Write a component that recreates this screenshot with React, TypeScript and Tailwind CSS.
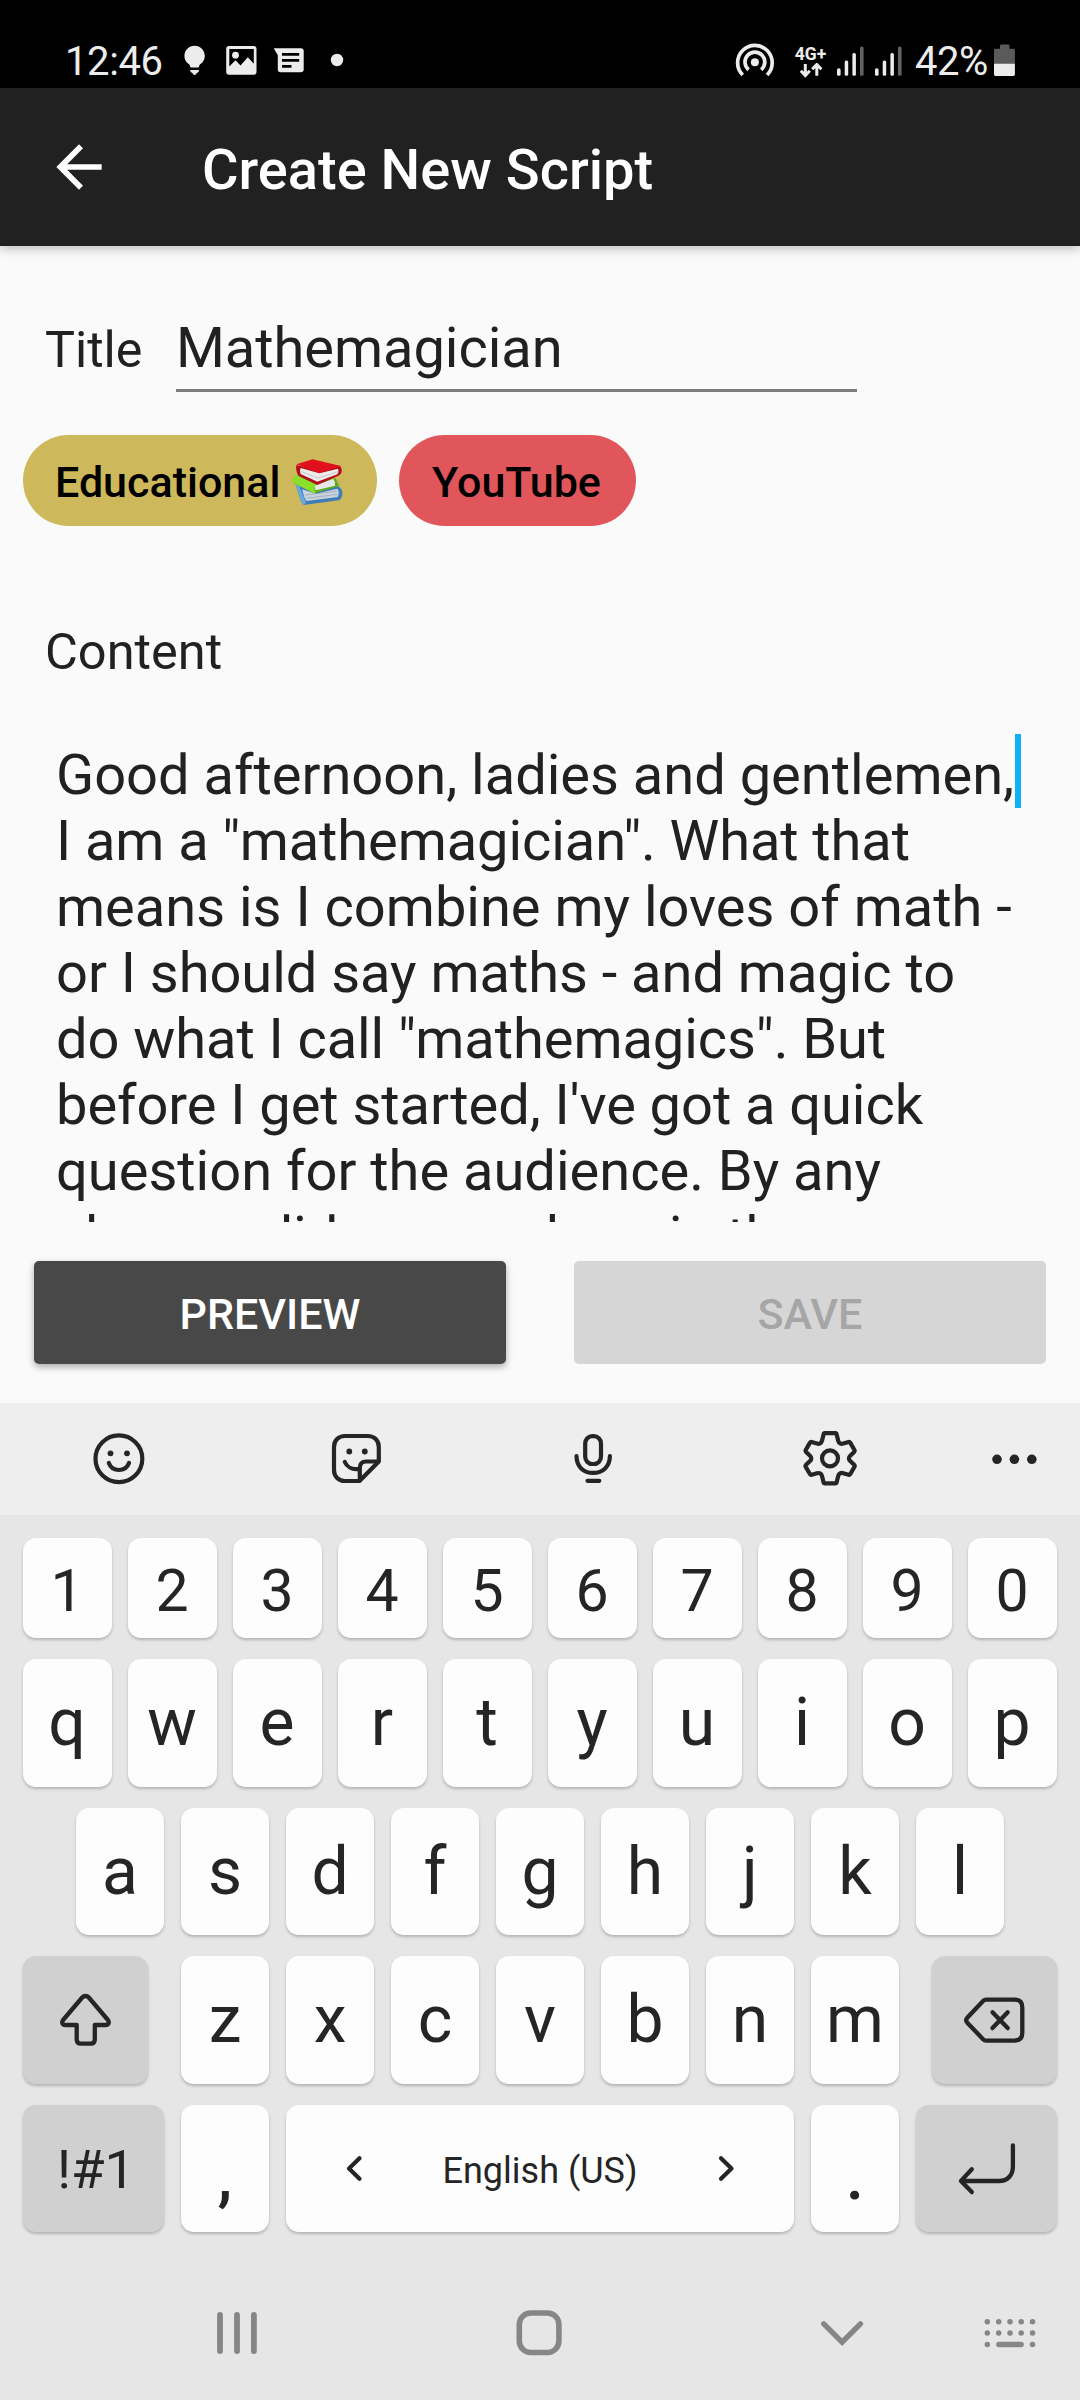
import type { ReactNode } from "react";

type IconProps = {
  box: [number, number, number, number];
  children: ReactNode;
  className?: string;
};

/** Inline drawing whose view box is given as [x, y, width, height] in screen units. */
function Icon({ box, children, className = "" }: IconProps) {
  return (
    <svg
      className={"block shrink-0 " + className}
      width={box[2]}
      height={box[3]}
      viewBox={box.join(" ")}
      fill="none"
    >
      {children}
    </svg>
  );
}

function SignalBars({ width }: { width: number }) {
  return (
    <Icon box={[0, 36, width, 52]}>
      <g fill="#ececec">
        <rect x="2" y="68.3" width="3.6" height="7.5" rx="1.6" />
        <rect x="9.7" y="60.5" width="3.5" height="15.3" rx="1.6" />
        <rect x="17.4" y="53" width="3.5" height="22.8" rx="1.6" />
      </g>
      <rect x="25" y="46.4" width="3.6" height="29.4" rx="1.6" fill="#616161" />
    </Icon>
  );
}

function StatusBar() {
  return (
    <header className="flex h-[88px] items-center bg-black pt-[36px] text-[40px] leading-[52px] text-[#ececec]">
      <span className="ml-[65px] w-[115px] tracking-[-0.4px]">12:46</span>
      <Icon box={[180, 36, 36, 52]}>
        <path
          fill="#ececec"
          d="M194.6 45.8c-5.8 0-10.2 4.6-10.2 10.2 0 3.6 1.8 6.4 4.6 8.3.8.6.9 1.3 1.1 2.1.2.7.6 1 1.2 1h6.6c.6 0 1-.3 1.2-1 .2-.8.3-1.5 1.1-2.1 2.8-1.9 4.6-4.7 4.6-8.3 0-5.6-4.4-10.200-10.200-10.200zM190.200 70h8.800c0 1.800-.8 2.500-2.200 2.900-.5 1.300-1.200 2-2.200 2s-1.700-.7-2.200-2c-1.400-.4-2.200-1.100-2.200-2.900z"
        />
      </Icon>
      <Icon box={[216, 36, 50, 52]}>
        <path
          fill="#ececec"
          fillRule="evenodd"
          d="M229 46h24.700c1.700 0 2.800 1.100 2.800 2.800v23.100c0 1.700-1.100 2.800-2.800 2.800H229c-1.700 0-2.800-1.100-2.800-2.800V48.800c0-1.700 1.100-2.800 2.800-2.800zM229.300 49v17.500l6.200-6.300 5 5.300 7.300-8.200 6 6.400V49z"
        />
        <circle cx="235.5" cy="55.2" r="3.4" fill="#ececec" />
      </Icon>
      <Icon box={[266, 36, 56, 52]}>
        <path
          fill="#ececec"
          d="M273.700 48.300h27.300c1.600 0 2.700 1.100 2.700 2.700v18.500c0 1.700-1.100 2.800-2.700 2.800h-20.400c-1.700 0-2.800-1.100-2.800-2.800V55.200z"
        />
        <path stroke="#000" strokeWidth="2.8" d="M282 54.300h17.200M282 60.400h17.200M282 66.400h9.500" />
      </Icon>
      <Icon box={[322, 36, 30, 52]}>
        <circle cx="337" cy="60" r="6.2" fill="#ececec" />
      </Icon>
      <Icon className="ml-auto" box={[732, 36, 56, 52]}>
        <g stroke="#ececec" strokeWidth="3.7">
          <path d="M742.700 75A17.300 17.300 0 1 1 767.100 75" />
          <path d="M748.600 69.700A9.900 9.900 0 1 1 761.200 69.700" />
        </g>
        <circle cx="754.9" cy="62.3" r="4" fill="#ececec" />
      </Icon>
      <div className="flex h-[52px] w-[47px] flex-col pl-[7px]">
        <span className="h-[27px] pt-[8px] text-[17.5px] leading-[20px] font-bold">4G+</span>
        <Icon box={[795, 63, 32, 15]}>
          <path
            stroke="#ececec"
            strokeWidth="3"
            d="M805.300 64v11.500M800.800 70.800l4.500 4.700 4.500-4.700M816.800 75.800V64.800M812.200 69.200l4.600-4.700 4.600 4.700"
          />
        </Icon>
      </div>
      <SignalBars width={38.2} />
      <SignalBars width={42} />
      <span className="w-[77px] tracking-[-0.5px]">42%</span>
      <Icon box={[992, 36, 88, 52]}>
        <path
          fill="#5a5a5a"
          d="M1000 46c0-1 .5-1.600 1.500-1.600h6.500c1 0 1.500.6 1.500 1.600v2.800h3.900c1 0 1.500.6 1.500 1.600v14H994v-14c0-1 .5-1.600 1.500-1.600h4.500z"
        />
        <path fill="#ececec" d="M994 63.700h20.900v10.600c0 1-.5 1.600-1.500 1.600h-17.900c-1 0-1.500-.6-1.500-1.600z" />
      </Icon>
    </header>
  );
}

function AppBar() {
  return (
    <div className="relative z-10 flex h-[158px] items-center bg-[#212121] shadow-[0_3px_10px_rgba(0,0,0,0.24)]">
      <svg className="ml-[45px] block h-[68px] w-[68px]" viewBox="0 0 24 24" fill="#fff">
        <path d="M20 11H7.830l5.590-5.590L12 4l-8 8 8 8 1.410-1.410L7.830 13H20v-2z" />
      </svg>
      <h1 className="ml-[89px] pt-[6px] text-[56px] leading-[66px] font-medium text-white">
        Create New Script
      </h1>
    </div>
  );
}

function Chip({ children, className }: { children: ReactNode; className: string }) {
  return (
    <div
      className={
        "flex h-[91px] items-center rounded-full pt-[4px] text-[43px] font-medium text-black " + className
      }
    >
      {children}
    </div>
  );
}

/** Stack of a red, a green and a blue book. */
function BooksEmoji() {
  return (
    <svg
      className="block shrink-0"
      width="52"
      height="49"
      viewBox="36 24 156 147"
      fill="none"
      role="img"
      aria-label="📚"
    >
      <path fill="#3f7cb8" d="M45 98 110 118 170 108Q188 112 187 132 186 147 176 151L72 165Q66 163 63 154Z" />
      <path fill="#c9d3dc" d="M66 118 108 131 172 116Q180 126 173 141L80 153Q76 150 73 142Z" />
      <path stroke="#8fa0b0" strokeWidth="2" d="M76 135 170 124M79 145 172 133" />
      <path fill="#6aa9dc" d="M45 98 56 104 78 158 72 165Q66 163 63 154Z" />
      <path fill="#5fae1c" d="M48 75 112 98 166 84 178 108 103 130 40 99Q34 86 48 75Z" />
      <path fill="#e6e8e8" d="M108 104 160 87Q167 96 165 107L108 121Q101 112 108 104Z" />
      <path fill="#8be02a" d="M48 75 108 103Q100 113 106 127L103 130 40 99Q35 86 48 75Z" />
      <path fill="#b3101c" d="M49 45 118 62 180 48Q188 58 184 69 180 76 172 79L112 105 55 77Q46 62 49 45Z" />
      <path fill="#eceaea" d="M62 54 118 70 174 56Q178 65 172 73L112 95 62 72Q58 62 62 54Z" />
      <path stroke="#b9b4b4" strokeWidth="2" d="M62 64 114 84 174 65" />
      <path fill="#e0101c" d="M49 43 98 28 183 48 118 69Z" />
    </svg>
  );
}

const SCRIPT_LINES = [
  { text: "Good afternoon, ladies and gentlemen,", tracking: "tracking-normal" },
  { text: 'I am a "mathemagician". What that', tracking: "tracking-[-0.08px]" },
  { text: "means is I combine my loves of math -", tracking: "tracking-normal" },
  { text: "or I should say maths - and magic to", tracking: "tracking-[-0.03px]" },
  { text: 'do what I call "mathemagics". But', tracking: "tracking-[-0.07px]" },
  { text: "before I get started, I've got a quick", tracking: "tracking-[-0.05px]" },
  { text: "question for the audience. By any", tracking: "tracking-normal" },
  { text: "chance, did anyone here in the", tracking: "tracking-normal" },
];

function Editor() {
  return (
    <main className="flex h-[1157px] flex-col bg-[#fafafa] pt-[69px] text-[#212121]">
      <div className="flex h-[77px] items-baseline pl-[45px]">
        <label className="w-[131px] text-[50.2px] leading-[60px]">Title</label>
        <div className="h-[77px] w-[681px] border-b-[3px] border-[#7b7b7b] text-[56px] leading-[66px] tracking-[-0.05px]">
          Mathemagician
        </div>
      </div>
      <div className="mt-[43px] flex gap-[22px] pl-[23px]">
        <Chip className="w-[354px] bg-[#cdb95b] pl-[32px]">
          <span className="w-[237px]">Educational</span>
          <BooksEmoji />
        </Chip>
        <Chip className="w-[237px] justify-center bg-[#e1565b] pr-[2px]">YouTube</Chip>
      </div>
      <div className="mt-[96px] pl-[45px] text-[50.5px] leading-[60px]">Content</div>
      <div className="relative mt-[52px] h-[488px] overflow-hidden pt-[8px] pl-[56px] text-[56px] leading-[66px] whitespace-pre">
        {SCRIPT_LINES.map((line) => (
          <div key={line.text} className={line.tracking}>
            {line.text}
          </div>
        ))}
        <span className="absolute top-0 left-[1015px] h-[74px] w-[6px] bg-[#11b0f5]" />
      </div>
      <div className="mt-[39px] flex gap-[68px] px-[34px] text-[43px] font-medium">
        <button className="h-[103px] flex-1 rounded-[5px] bg-[#484848] pt-[3px] text-white shadow-[0_3px_7px_rgba(0,0,0,0.32)]">
          PREVIEW
        </button>
        <button className="h-[103px] flex-1 rounded-[5px] bg-[#d6d6d6] pt-[3px] text-[#a6a6a6]">SAVE</button>
      </div>
    </main>
  );
}

function KeyboardToolbar() {
  return (
    <div className="flex h-[112px] items-center bg-[#eeeeee] pl-[90px]">
      <Icon box={[90, 1403, 58, 112]}>
        <g stroke="#252525" strokeWidth="4.2" strokeLinecap="round">
          <circle cx="118.9" cy="1458.7" r="23.4" />
          <path d="M108.800 1463c1.700 4.500 5.500 7 10.100 7s8.400-2.500 10.100-7" />
        </g>
        <circle cx="110.5" cy="1453.3" r="2.9" fill="#252525" />
        <circle cx="127" cy="1453.3" r="2.9" fill="#252525" />
      </Icon>
      <Icon className="ml-[182px]" box={[330, 1403, 54, 112]}>
        <g stroke="#252525" strokeWidth="4.2" strokeLinecap="round" strokeLinejoin="round">
          <path d="M359.500 1481H345c-6.500 0-11-4.500-11-11v-23c0-6.500 4.500-11 11-11h22.800c6.500 0 11 4.500 11 11v14.500z" />
          <path d="M359.800 1479.500V1468c0-4.500 2.500-6.500 6.500-6.500h11M344.800 1462c2 4.600 7 7.600 13 7" />
        </g>
        <circle cx="349.3" cy="1451.5" r="2.9" fill="#252525" />
        <circle cx="364.8" cy="1451.5" r="2.9" fill="#252525" />
      </Icon>
      <Icon className="ml-[186px]" box={[570, 1403, 46, 112]}>
        <g stroke="#252525" strokeWidth="4.2" strokeLinecap="round">
          <rect x="585.2" y="1436.2" width="15.8" height="27.8" rx="7.2" />
          <path d="M576.500 1456c0 10.500 7 16.900 16.600 16.900s16.800-6.400 16.800-16.900M587.500 1480.800h11.800" />
        </g>
      </Icon>
      <Icon className="ml-[184px]" box={[800, 1403, 60, 112]}>
        <g stroke="#252525" strokeWidth="4.2" strokeLinejoin="round">
          <path d="M824.800 1433.200h10.600q1 0 1.200 1l1.600 6.600c.6 2.400 2.800 3.500 5 2.800l5.400-1.600q1-.3 1.600.6l4.400 7.600q.5.9-.2 1.600l-4.200 4c-1.700 1.600-1.700 3.600 0 5.200l4.200 4q.7.700.2 1.600l-4.400 7.600q-.6.900-1.600.6l-5.400-1.600c-2.200-.7-4.400.4-5 2.800l-1.600 6.400q-.2 1-1.200 1h-10.600q-1 0-1.200-1l-1.600-6.400c-.6-2.400-2.800-3.500-5-2.800l-5.400 1.600q-1 .3-1.600-.6l-4.400-7.600q-.5-.9.200-1.600l4.200-4c1.700-1.600 1.700-3.600 0-5.200l-4.200-4q-.7-.7-.2-1.600l4.400-7.600q.6-.9 1.600-.6l5.400 1.600c2.200.7 4.400-.4 5-2.800l1.600-6.600q.2-1 1.200-1z" />
          <circle cx="830" cy="1458.3" r="8" />
        </g>
      </Icon>
      <Icon className="ml-[130px]" box={[990, 1403, 50, 112]}>
        <g fill="#252525">
          <circle cx="997" cy="1459.3" r="4.8" />
          <circle cx="1014.4" cy="1459.3" r="4.8" />
          <circle cx="1031.8" cy="1459.3" r="4.8" />
        </g>
      </Icon>
    </div>
  );
}

function Key({ children, className }: { children: ReactNode; className: string }) {
  return (
    <button
      className={
        "flex h-full shrink-0 items-center justify-center rounded-[13px] shadow-[0_2px_3px_rgba(0,0,0,0.22)] " +
        className
      }
    >
      {children}
    </button>
  );
}

function Keyboard() {
  return (
    <section className="flex h-[765px] flex-col gap-[21px] bg-[#e6e6e6] px-[23px] pt-[23px] text-[66px] leading-none text-[#252525]">
      <div className="flex h-[100px] gap-[16px] text-[59px]">
        {[..."1234567890"].map((k) => (
          <Key key={k} className="w-[89px] bg-[#fdfdfd] pt-[4px] pr-[1px]">
            {k}
          </Key>
        ))}
      </div>
      <div className="flex h-[128px] gap-[16px]">
        {[..."qwertyuiop"].map((k) => (
          <Key key={k} className="w-[89px] bg-[#fdfdfd] pr-[1px]">
            {k}
          </Key>
        ))}
      </div>
      <div className="flex h-[127px] gap-[17px] pl-[53px]">
        {[..."asdfghjkl"].map((k) => (
          <Key key={k} className="w-[88px] bg-[#fdfdfd]">
            {k}
          </Key>
        ))}
      </div>
      <div className="flex h-[128px] justify-between">
        <Key className="w-[125px] bg-[#d0d0d0]">
          <Icon box={[58, 1990, 55, 60]}>
            <path
              stroke="#252525"
              strokeWidth="4.3"
              strokeLinejoin="round"
              d="M82.200 1997.500 63.500 2019.500C61 2022.500 62.500 2025 65.500 2025H76.700V2039.500Q76.700 2043.700 81 2043.700H90.500Q94.800 2043.700 94.800 2039.500V2025H105.500C108.500 2025 110 2022.500 107.500 2019.500L88.800 1997.500C87 1995.500 84 1995.500 82.200 1997.500Z"
            />
          </Icon>
        </Key>
        <div className="flex h-full gap-[17px]">
          {[..."zxcvbnm"].map((k) => (
            <Key key={k} className="w-[88px] bg-[#fdfdfd]">
              {k}
            </Key>
          ))}
        </div>
        <Key className="w-[125px] bg-[#d0d0d0]">
          <Icon box={[962, 1994, 65, 52]}>
            <g stroke="#252525" strokeWidth="4.3" strokeLinecap="round" strokeLinejoin="round">
              <path d="M986 1999.600H1014.500Q1022.300 1999.600 1022.300 2007.400V2032.800Q1022.300 2040.600 1014.500 2040.600H986Q984.500 2040.600 983.300 2039.400L967.500 2023Q964.800 2020.200 967.500 2017.400L983.300 2000.800Q984.500 1999.600 986 1999.600Z" />
              <path d="M992.500 2012.300l15.200 15.800M1007.700 2012.300l-15.200 15.800" />
            </g>
          </Icon>
        </Key>
      </div>
      <div className="flex h-[127px] gap-[17px]">
        <Key className="w-[141px] bg-[#d0d0d0] pt-[1px] pl-[5px] text-[54.5px]">!#1</Key>
        <Key className="w-[88px] bg-[#fdfdfd] pt-[16px] font-medium">,</Key>
        <Key className="w-[508px] bg-[#fdfdfd]">
          <Icon box={[340, 2150, 30, 38]}>
            <path
              stroke="#252525"
              strokeWidth="4.2"
              strokeLinecap="round"
              strokeLinejoin="round"
              d="M359.500 2158.200l-10.500 10.300 10.500 10.300"
            />
          </Icon>
          <span className="w-[340px] pt-[4px] text-center text-[36px]">English (US)</span>
          <Icon box={[710, 2150, 30, 38]}>
            <path
              stroke="#252525"
              strokeWidth="4.2"
              strokeLinecap="round"
              strokeLinejoin="round"
              d="M721 2158.200l10.500 10.300-10.500 10.300"
            />
          </Icon>
        </Key>
        <Key className="w-[88px] bg-[#fdfdfd] pt-[16px] font-medium">.</Key>
        <Key className="w-[141px] bg-[#d0d0d0]">
          <Icon box={[954, 2138, 65, 61]}>
            <path
              stroke="#252525"
              strokeWidth="4.3"
              strokeLinecap="round"
              strokeLinejoin="round"
              d="M1012.900 2145.300v21.200c0 9-5.500 14.500-14 14.500H961M971.800 2169.300 961 2180.900l10.800 11.200"
            />
          </Icon>
        </Key>
      </div>
    </section>
  );
}

function NavigationBar() {
  return (
    <nav className="flex h-[120px] bg-[#e6e6e6] pl-[212px]">
      <Icon box={[212, 2280, 50, 120]}>
        <path
          stroke="#868686"
          strokeWidth="5.8"
          strokeLinecap="round"
          d="M220 2315v36M237 2315v36M253.900 2315v36"
        />
      </Icon>
      <Icon className="ml-[248px]" box={[510, 2280, 58, 120]}>
        <rect x="519.3" y="2313" width="39.6" height="39.5" rx="11.5" stroke="#868686" strokeWidth="5.6" />
      </Icon>
      <Icon className="ml-[248px]" box={[816, 2280, 52, 120]}>
        <path stroke="#868686" strokeWidth="5.4" strokeLinecap="round" d="M823.800 2323.800l18.300 18.300 18.300-18.300" />
      </Icon>
      <Icon className="ml-[112px]" box={[980, 2280, 60, 120]}>
        <g stroke="#868686" strokeWidth="5.5" strokeLinecap="round">
          {[987.3, 998.7, 1010, 1021.2, 1032.5].map((x) => (
            <path key={x} d={`M${x} 2321.700h.01M${x} 2333h.01`} />
          ))}
          <path d="M987.300 2344.400h.01M1032.500 2344.400h.01M998.900 2344.400h22.200" />
        </g>
      </Icon>
    </nav>
  );
}

export default function App() {
  return (
    <div className="flex h-[2400px] w-[1080px] flex-col overflow-hidden bg-[#fafafa] font-[Roboto,sans-serif]">
      <StatusBar />
      <AppBar />
      <Editor />
      <KeyboardToolbar />
      <Keyboard />
      <NavigationBar />
    </div>
  );
}
